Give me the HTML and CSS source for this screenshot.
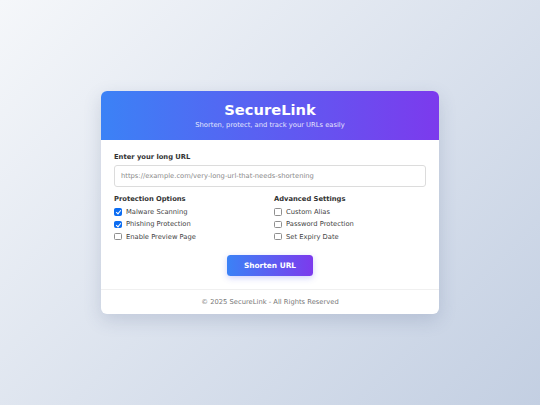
FILE: index.html
```html
<!DOCTYPE html>
<html lang="en">
<head>
<meta charset="utf-8">
<title>SecureLink</title>
<link rel="stylesheet" href="styles.css">
</head>
<body>
<div class="card">
  <div class="header">
    <div class="title">SecureLink</div>
    <div class="subtitle">Shorten, protect, and track your URLs easily</div>
  </div>
  <div class="body">
    <label class="label" for="url">Enter your long URL</label>
    <input class="url-input" id="url" type="text" placeholder="https://example.com/very-long-url-that-needs-shortening">
    <div class="options">
      <div class="group">
        <div class="group-title">Protection Options</div>
        <label class="opt"><input type="checkbox" checked><span>Malware Scanning</span></label>
        <label class="opt"><input type="checkbox" checked><span>Phishing Protection</span></label>
        <label class="opt"><input type="checkbox"><span>Enable Preview Page</span></label>
      </div>
      <div class="group">
        <div class="group-title">Advanced Settings</div>
        <label class="opt"><input type="checkbox"><span>Custom Alias</span></label>
        <label class="opt"><input type="checkbox"><span>Password Protection</span></label>
        <label class="opt"><input type="checkbox"><span>Set Expiry Date</span></label>
      </div>
    </div>
    <div class="actions">
      <button class="btn" type="button">Shorten URL</button>
    </div>
  </div>
  <div class="footer">© 2025 SecureLink - All Rights Reserved</div>
</div>
</body>
</html>
```

FILE: styles.css
```css
* { box-sizing: border-box; }
html, body { margin: 0; padding: 0; }
body {
  height: 405px;
  background: linear-gradient(135deg, #f5f7fa 0%, #c3cfe2 100%);
  font-family: "DejaVu Sans", Verdana, sans-serif;
  display: flex;
  align-items: center;
  justify-content: center;
}
.card {
  width: 338px;
  background: #fff;
  border-radius: 6px;
  overflow: hidden;
  box-shadow: 0 6px 18px rgba(60, 80, 120, 0.18);
}
.header {
  background: linear-gradient(90deg, #3b82f6 0%, #7c3aed 100%);
  color: #fff;
  text-align: center;
  padding: 10px 0 11px;
}
.title {
  font-size: 14.7px;
  font-weight: bold;
  line-height: 18px;
}
.subtitle {
  font-size: 6.75px;
  line-height: 8px;
  margin-top: 2px;
  opacity: 0.85;
}
.body {
  padding: 13px 13px 13.3px;
}
.label {
  display: block;
  font-size: 6.75px;
  font-weight: bold;
  line-height: 8px;
  color: #333;
  margin-bottom: 4px;
}
.url-input {
  display: block;
  width: 100%;
  height: 22px;
  border: 1px solid #dcdcdc;
  border-radius: 3px;
  padding: 0 6px;
  font-family: "DejaVu Sans", Verdana, sans-serif;
  font-size: 6.75px;
  color: #333;
  outline: none;
}
.url-input::placeholder { color: #8a8a8a; }
.options {
  display: grid;
  grid-template-columns: 1fr 1fr;
  column-gap: 8px;
  margin-top: 8px;
}
.group {
  display: flex;
  flex-direction: column;
  gap: 4.33px;
}
.group-title {
  font-size: 6.75px;
  font-weight: bold;
  line-height: 8px;
  color: #333;
  margin-bottom: 0.7px;
}
.opt {
  display: flex;
  align-items: center;
  gap: 4.5px;
  font-size: 6.75px;
  line-height: 8px;
  color: #444;
}
.opt input {
  appearance: none;
  -webkit-appearance: none;
  position: relative;
  width: 7.5px;
  height: 7.5px;
  margin: 0;
  flex: none;
  border: 1px solid #8f8f8f;
  border-radius: 1.5px;
  background: #fff;
}
.opt input:checked {
  background: #0b6cf2;
  border-color: #0b6cf2;
}
.opt input:checked::after {
  content: "";
  position: absolute;
  left: 1.6px;
  top: 0.2px;
  width: 2px;
  height: 4px;
  border: solid #fff;
  border-width: 0 1.2px 1.2px 0;
  transform: rotate(40deg);
}
.actions {
  display: flex;
  justify-content: center;
  margin-top: 14px;
}
.btn {
  width: 86px;
  height: 21px;
  border: none;
  border-radius: 3.5px;
  background: linear-gradient(90deg, #3b82f6 0%, #7c3aed 100%);
  color: #fff;
  font-family: "DejaVu Sans", Verdana, sans-serif;
  font-size: 7.4px;
  font-weight: bold;
  box-shadow: 0 2px 6px rgba(99, 102, 241, 0.3);
  padding: 0;
}
.footer {
  border-top: 1px solid #f0f0f0;
  text-align: center;
  font-size: 6.75px;
  line-height: 8px;
  color: #777;
  padding: 8.5px 0 7.5px;
}
```
